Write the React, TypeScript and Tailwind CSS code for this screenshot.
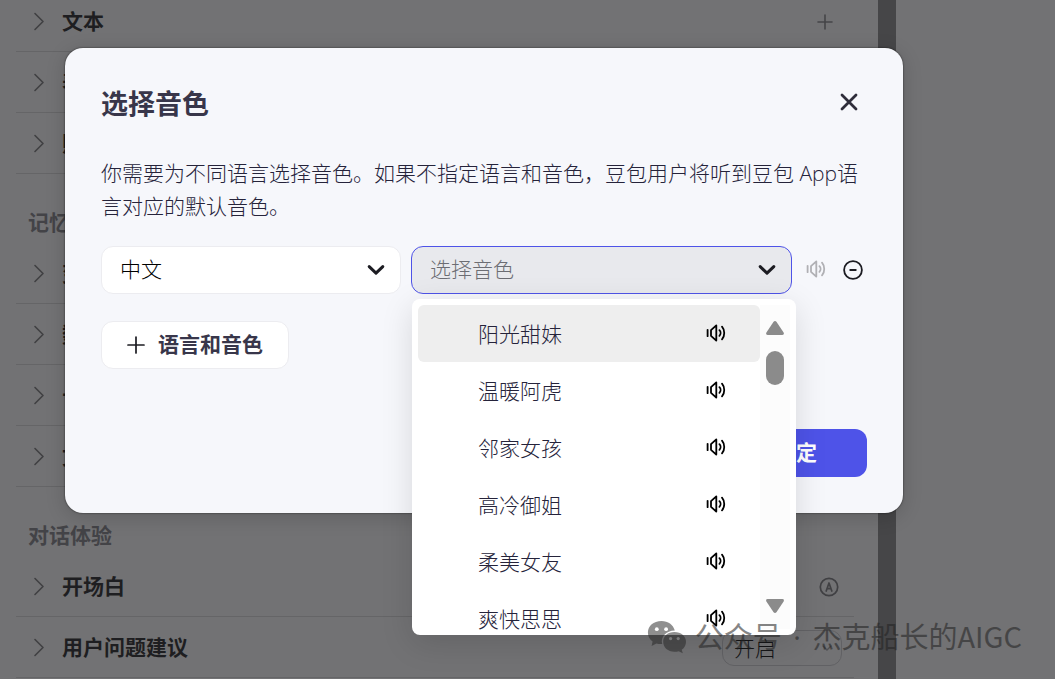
import { useState } from "react";

const KNOWLEDGE = ["文本", "表格", "照片"];
const MEMORY = ["变量", "数据库", "长期记忆", "文件盒子"];
const VOICES = [
	"阳光甜妹",
	"温暖阿虎",
	"邻家女孩",
	"高冷御姐",
	"柔美女友",
	"爽快思思",
];

function ChevronRight() {
	return (
		<svg
			aria-hidden="true"
			className="shrink-0"
			fill="none"
			height="20"
			stroke="#404043"
			strokeLinecap="round"
			strokeLinejoin="round"
			strokeWidth="1.6"
			viewBox="0 0 12 20"
			width="12"
		>
			<path d="M2 1.5L10 9.5L2 17.5" />
		</svg>
	);
}

function ChevronDown({ className }: { className: string }) {
	return (
		<svg
			aria-hidden="true"
			className={className}
			fill="none"
			height="12"
			stroke="#1c1c22"
			strokeLinecap="round"
			strokeLinejoin="round"
			strokeWidth="3"
			viewBox="0 0 18 12"
			width="18"
		>
			<path d="M2.2 2.6L9 9.2L15.8 2.6" />
		</svg>
	);
}

function Speaker() {
	return (
		<svg
			aria-hidden="true"
			fill="none"
			height="18"
			stroke="currentColor"
			strokeLinecap="round"
			strokeLinejoin="round"
			strokeWidth="1.8"
			viewBox="0 0 20 18"
			width="20"
		>
			<path d="M1.6 5.8V12.2" />
			<path d="M5 6.2L10.3 1.4V16.6L5 11.8Z" />
			<path d="M13.4 6.2C15 7.8 15 10.2 13.4 11.8" />
			<path d="M16 2.6C19 6 19 12 16 15.4" />
		</svg>
	);
}

function Row({
	label,
	children,
}: {
	label: string;
	children?: React.ReactNode;
}) {
	return (
		<div className="flex h-[61px] items-center border-[#656567] border-b pt-0.5 pr-3">
			<button
				className="flex flex-1 items-center gap-[17px] pl-[17px] text-left font-bold text-[#1e1e21] text-[21px]"
				type="button"
			>
				<ChevronRight />
				{label}
			</button>
			{children}
		</div>
	);
}

function Heading({ children }: { children: string }) {
	return (
		<h2 className="flex h-[69px] items-end pb-[5px] pl-3 font-bold text-[#434347] text-[21px] leading-[32px]">
			{children}
		</h2>
	);
}

function SettingsPanel() {
	return (
		<section className="min-w-0 flex-1 overflow-hidden pr-6 pl-4">
			<div className="-mt-[9px]">
				{KNOWLEDGE.map((label) => (
					<Row key={label} label={label}>
						{label === "文本" && (
							<button aria-label="添加文本" className="mr-2" type="button">
								<svg
									aria-hidden="true"
									fill="none"
									height="18"
									stroke="#454548"
									strokeLinecap="round"
									strokeWidth="1.6"
									viewBox="0 0 18 18"
									width="18"
								>
									<path d="M9 2V16M2 9H16" />
								</svg>
							</button>
						)}
					</Row>
				))}
				<Heading>记忆</Heading>
				{MEMORY.map((label) => (
					<Row key={label} label={label} />
				))}
				<Heading>对话体验</Heading>
				<Row label="开场白">
					<button aria-label="自动生成" className="mr-[3px]" type="button">
						<svg
							aria-hidden="true"
							fill="none"
							height="20"
							stroke="#404043"
							strokeLinecap="round"
							strokeLinejoin="round"
							strokeWidth="1.7"
							viewBox="0 0 20 20"
							width="20"
						>
							<circle cx="10" cy="10" r="8.7" />
							<path d="M7.2 14L10 6L12.8 14M8 11.6H12" />
						</svg>
					</button>
				</Row>
				<Row label="用户问题建议">
					<div className="relative">
						<select
							aria-label="用户问题建议"
							className="h-9 w-[120px] appearance-none rounded-xl border border-[#616164] bg-transparent pt-0.5 pl-[11px] font-light text-[#151517] text-[21px]"
						>
							<option>开启</option>
						</select>
						<svg
							aria-hidden="true"
							className="pointer-events-none absolute top-[14px] right-[10px]"
							fill="none"
							height="8"
							stroke="#505053"
							strokeLinecap="round"
							strokeWidth="1.4"
							viewBox="0 0 10 8"
							width="10"
						>
							<path d="M1 2L5 6L9 2" />
						</svg>
					</div>
				</Row>
			</div>
		</section>
	);
}

function VoiceMenu({ onPick }: { onPick: (voice: string) => void }) {
	return (
		<div className="absolute top-full left-px mt-[5px] flex h-[336px] w-[384px] overflow-hidden rounded-lg bg-white p-1.5 pb-0 shadow-[0_8px_32px_rgba(0,0,0,0.13)]">
			<ul className="flex-1">
				{VOICES.map((voice, i) => (
					<li
						className={
							i === 0
								? "flex h-[57px] items-center rounded-md bg-[#eeeeee] pr-[34px] pl-[60px]"
								: "flex h-[57px] items-center rounded-md pr-[34px] pl-[60px]"
						}
						key={voice}
					>
						<button
							className="flex-1 text-left font-light text-[#25233a] text-[21px] leading-[32px]"
							onClick={() => onPick(voice)}
							type="button"
						>
							{voice}
						</button>
						<button
							aria-label={`试听${voice}`}
							className="pb-0.5 text-black"
							type="button"
						>
							<Speaker />
						</button>
					</li>
				))}
			</ul>
			<div className="mb-1.5 flex w-[30px] flex-col items-center bg-[#fcfcfc] pt-4 pb-4">
				<svg
					aria-hidden="true"
					fill="#8b8b8b"
					height="14"
					viewBox="0 0 18 14"
					width="18"
				>
					<path d="M7.4 0.9Q9 -0.8 10.6 0.9L17.6 11.6Q18.6 14 16.4 14H1.6Q-0.6 14 0.4 11.6Z" />
				</svg>
				<div className="mt-4 h-[34px] w-[18px] rounded-full bg-[#8b8b8b]" />
				<svg
					aria-hidden="true"
					className="mt-auto"
					fill="#8b8b8b"
					height="14"
					viewBox="0 0 18 14"
					width="18"
				>
					<path d="M7.4 13.1Q9 14.8 10.6 13.1L17.6 2.4Q18.6 0 16.4 0H1.6Q-0.6 0 0.4 2.4Z" />
				</svg>
			</div>
		</div>
	);
}

function VoiceDialog() {
	const [voice, setVoice] = useState("");

	return (
		<div
			aria-labelledby="voice-title"
			className="w-full max-w-[838px] rounded-[18px] bg-[#f6f7fb] p-9 shadow-[0_0_2px_rgba(0,0,0,0.7),0_4px_20px_rgba(0,0,0,0.16)]"
			role="dialog"
		>
			<div className="flex items-center justify-between">
				<h1
					className="font-bold text-[#38364a] text-[27px] leading-[40px]"
					id="voice-title"
				>
					选择音色
				</h1>
				<button aria-label="关闭" className="mr-2 mb-1" type="button">
					<svg
						aria-hidden="true"
						fill="none"
						height="20"
						stroke="#2e2d3a"
						strokeLinecap="round"
						strokeWidth="2.8"
						viewBox="0 0 20 20"
						width="20"
					>
						<path d="M3 3L17 17M17 3L3 17" />
					</svg>
				</button>
			</div>
			<p className="mt-[33px] font-light text-[#25233a] text-[21px] leading-[33px]">
				{
					"你需要为不同语言选择音色。如果不指定语言和音色\uff0c豆包用户将听到豆包 App语言对应的默认音色。"
				}
			</p>
			<div className="mt-[23px] flex items-center">
				<div className="relative w-[300px]">
					<select
						aria-label="语言"
						className="h-12 w-full appearance-none rounded-xl border border-[#ececf0] bg-white pl-[18px] font-light text-[21px] text-black"
					>
						<option>中文</option>
					</select>
					<ChevronDown className="pointer-events-none absolute top-[18px] right-4" />
				</div>
				<div className="relative ml-2.5 min-w-0 flex-1">
					<select
						aria-label="音色"
						className="h-12 w-full appearance-none rounded-xl border border-[#4e53e8] bg-[#e8e9ed] pl-[18px] font-light text-[#6c6d73] text-[21px]"
						onChange={(e) => setVoice(e.target.value)}
						value={voice}
					>
						<option value="">选择音色</option>
						{VOICES.map((v) => (
							<option key={v}>{v}</option>
						))}
					</select>
					<ChevronDown className="pointer-events-none absolute top-[18px] right-4" />
					<VoiceMenu onPick={setVoice} />
				</div>
				<button
					aria-label="试听"
					className="ml-3.5 pb-0.5 text-[#b0b0b4]"
					disabled
					type="button"
				>
					<Speaker />
				</button>
				<button aria-label="移除" className="mr-1 ml-[17px]" type="button">
					<svg
						aria-hidden="true"
						fill="none"
						height="20"
						stroke="#1c1c22"
						strokeLinecap="round"
						strokeWidth="1.8"
						viewBox="0 0 20 20"
						width="20"
					>
						<circle cx="10" cy="10" r="8.9" />
						<path d="M7.2 10H12.8" />
					</svg>
				</button>
			</div>
			<button
				className="mt-[27px] flex h-12 w-[188px] items-center gap-3 rounded-xl border border-[#ececf0] bg-white pl-6 font-bold text-[#38364a] text-[21px]"
				type="button"
			>
				<svg
					aria-hidden="true"
					className="shrink-0"
					fill="none"
					height="20"
					stroke="#1c1c22"
					strokeLinecap="round"
					strokeWidth="1.7"
					viewBox="0 0 20 20"
					width="20"
				>
					<path d="M10 2V18M2 10H18" />
				</svg>
				语言和音色
			</button>
			<div className="mt-[60px] flex justify-end">
				<button
					className="h-12 w-[142px] rounded-xl bg-[#4e53e8] font-bold text-[21px] text-white"
					type="button"
				>
					确定
				</button>
			</div>
		</div>
	);
}

function Watermark() {
	return (
		<div className="pointer-events-none absolute right-[33px] bottom-[22px] flex items-center gap-2 font-['Noto_Sans_CJK_SC',sans-serif] text-[#222222] text-[29px] leading-[40px]">
			<svg
				aria-hidden="true"
				className="mt-1 opacity-50"
				height="36"
				viewBox="0 0 40 36"
				width="40"
			>
				<path
					d="M14.5 1C6.5 1 0.9 6 0.9 12.6C0.9 16.4 2.6 19.4 5.6 21.6L4.6 26L9.4 23.4C11.2 23.9 13.2 24.2 15.2 24C13.2 17 19 10.4 27.8 10.4C26.2 4.8 21 1 14.5 1Z"
					fill="currentColor"
				/>
				<path
					d="M27.4 12C20.8 12 16.2 16.2 16.2 21.8C16.2 27.5 21 31.8 27.4 31.8C29 31.8 30.3 31.6 31.7 31.2L35.8 33.2L34.7 29.8C37.5 27.9 39 25 39 21.8C39 16.2 34 12 27.4 12Z"
					fill="currentColor"
				/>
				<circle cx="9.8" cy="9.2" fill="#fff" r="1.9" />
				<circle cx="19.1" cy="9.2" fill="#fff" r="1.9" />
				<circle cx="23.6" cy="18.6" fill="#8a8a8a" r="1.6" />
				<circle cx="31.2" cy="18.6" fill="#8a8a8a" r="1.6" />
			</svg>
			<span className="opacity-55">
				公众号
				<span className="mx-1 whitespace-pre font-['Open_Sans',sans-serif]">
					{" · "}
				</span>
				杰克船长的AIGC
			</span>
		</div>
	);
}

export default function App() {
	return (
		<div className="relative h-screen overflow-hidden bg-[#727274] font-['Open_Sans','Noto_Sans_CJK_SC',sans-serif]">
			<main className="flex h-full">
				<SettingsPanel />
				<div className="w-[18px] bg-[#464648]" />
				<aside className="w-[159px]" />
			</main>
			<div className="absolute inset-0 pt-12 pr-[152px] pl-[65px]">
				<VoiceDialog />
			</div>
			<Watermark />
		</div>
	);
}
